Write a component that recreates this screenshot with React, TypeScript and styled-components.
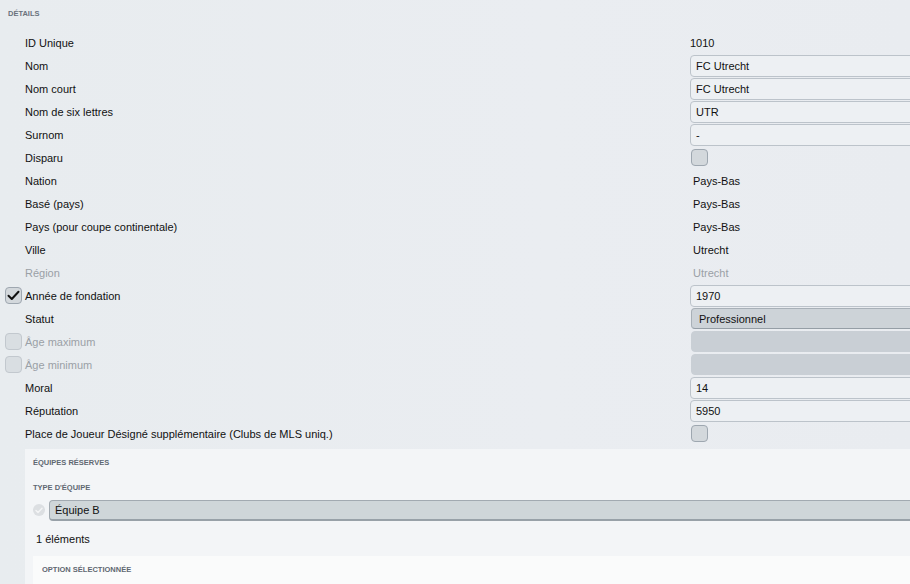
import React from "react";
import styled, { createGlobalStyle } from "styled-components";

const Global = createGlobalStyle`
  html, body { margin: 0; padding: 0; background: #e9edf0; }
  body { font-family: "Liberation Sans", Arial, sans-serif; color: #111; }
`;

const Page = styled.div`
  width: 910px;
  height: 584px;
  overflow: hidden;
  background: linear-gradient(90deg, #e8ecef 0%, #eaedf1 60%, #e9ecf0 100%);
`;

const SectionTitle = styled.div<{ $pl?: number; $h?: number }>`
  height: ${(p) => p.$h ?? 26}px;
  padding-left: ${(p) => p.$pl ?? 8}px;
  display: flex;
  align-items: center;
  font-size: 7.5px;
  font-weight: bold;
  color: #69727c;
  text-transform: uppercase;
`;

const Rows = styled.div`
  padding-top: 5px;
  display: flex;
  flex-direction: column;
`;

const Row = styled.div`
  display: grid;
  grid-template-columns: 25px 665px 1fr;
  height: 23px;
  align-items: center;
`;

const Label = styled.div<{ $disabled?: boolean }>`
  font-size: 11px;
  color: ${(p) => (p.$disabled ? "#9aa0a6" : "#111")};
  white-space: nowrap;
`;

const Value = styled.div<{ $disabled?: boolean; $indent?: number }>`
  font-size: 11px;
  padding-left: ${(p) => p.$indent ?? 0}px;
  color: ${(p) => (p.$disabled ? "#9aa0a6" : "#111")};
  white-space: nowrap;
`;

const Input = styled.div`
  box-sizing: border-box;
  height: 22px;
  width: 240px;
  border: 1px solid #bcc3ca;
  border-radius: 4px;
  background: #edf0f3;
  display: flex;
  align-items: center;
  padding-left: 5px;
  font-size: 11px;
  color: #111;
`;

const Select = styled.div<{ $empty?: boolean }>`
  box-sizing: border-box;
  height: 21px;
  width: 240px;
  margin-left: 1px;
  border: 1px solid ${(p) => (p.$empty ? "#c9cfd5" : "#a8b0b7")};
  border-bottom-color: ${(p) => (p.$empty ? "#c9cfd5" : "#959ea6")};
  border-radius: 4px;
  background: ${(p) => (p.$empty ? "#c9cfd5" : "#cdd3d8")};
  display: flex;
  align-items: center;
  padding-left: 7px;
  font-size: 11px;
  color: #111;
`;

const Box = styled.div<{ $disabled?: boolean }>`
  box-sizing: border-box;
  width: 17px;
  height: 17px;
  margin-left: ${(p) => (p.$disabled === undefined ? 1 : 0)}px;
  border: 1px solid ${(p) => (p.$disabled ? "#c2c8ce" : "#9ea7b0")};
  border-radius: 4px;
  background: ${(p) => (p.$disabled ? "#d9dee2" : "#d3d8dc")};
  display: flex;
  align-items: center;
  justify-content: center;
`;

const LeftCell = styled.div`
  display: flex;
  align-items: center;
  padding-left: 5px;
`;

const SubPanel = styled.div`
  margin: 4px 0 0 25px;
  background: #f3f5f7;
`;

const SubTitle = styled.div<{ $pl: number; $h: number }>`
  height: ${(p) => p.$h}px;
  padding-left: ${(p) => p.$pl}px;
  display: flex;
  align-items: center;
  font-size: 7.5px;
  font-weight: bold;
  color: #5f6872;
  text-transform: uppercase;
`;

const TypeRow = styled.div`
  display: flex;
  align-items: center;
  height: 22px;
  padding-left: 8px;
  gap: 4px;
`;

const CircleCheck = styled.div`
  width: 12px;
  height: 12px;
  border-radius: 50%;
  background: #dcdfe2;
  display: flex;
  align-items: center;
  justify-content: center;
`;

const TypeSelect = styled.div`
  box-sizing: border-box;
  flex: 1;
  height: 21px;
  margin-right: -10px;
  border: 1px solid #a2aab1;
  border-bottom: 2px solid #98a1a8;
  border-radius: 4px;
  background: #cfd6d9;
  display: flex;
  align-items: center;
  padding-left: 5px;
  font-size: 11px;
  color: #111;
`;

const Count = styled.div`
  height: 35px;
  display: flex;
  align-items: center;
  padding-left: 11px;
  font-size: 11px;
  color: #111;
`;

const InnerPanel = styled.div`
  margin-left: 8px;
  background: #fafbfb;
  height: 40px;
`;

const Check = () => (
  <svg width="13" height="11" viewBox="0 0 13 11">
    <path d="M1.5 5.8 L4.8 9 L11.5 1.8" fill="none" stroke="#111" strokeWidth="2" strokeLinecap="round" strokeLinejoin="round" />
  </svg>
);

const SmallCheck = () => (
  <svg width="8" height="7" viewBox="0 0 8 7">
    <path d="M1 3.6 L3 5.5 L7 1.3" fill="none" stroke="#f4f5f6" strokeWidth="1.4" strokeLinecap="round" strokeLinejoin="round" />
  </svg>
);

type Kind = "text" | "input" | "box" | "select" | "empty";
type R = { label: string; value?: string; kind: Kind; disabled?: boolean; left?: "checked" | "off"; indent?: number };

const rows: R[] = [
  { label: "ID Unique", value: "1010", kind: "text" },
  { label: "Nom", value: "FC Utrecht", kind: "input" },
  { label: "Nom court", value: "FC Utrecht", kind: "input" },
  { label: "Nom de six lettres", value: "UTR", kind: "input" },
  { label: "Surnom", value: "-", kind: "input" },
  { label: "Disparu", kind: "box" },
  { label: "Nation", value: "Pays-Bas", kind: "text", indent: 3 },
  { label: "Basé (pays)", value: "Pays-Bas", kind: "text", indent: 3 },
  { label: "Pays (pour coupe continentale)", value: "Pays-Bas", kind: "text", indent: 3 },
  { label: "Ville", value: "Utrecht", kind: "text", indent: 3 },
  { label: "Région", value: "Utrecht", kind: "text", disabled: true, indent: 3 },
  { label: "Année de fondation", value: "1970", kind: "input", left: "checked" },
  { label: "Statut", value: "Professionnel", kind: "select" },
  { label: "Âge maximum", kind: "empty", disabled: true, left: "off" },
  { label: "Âge minimum", kind: "empty", disabled: true, left: "off" },
  { label: "Moral", value: "14", kind: "input" },
  { label: "Réputation", value: "5950", kind: "input" },
  { label: "Place de Joueur Désigné supplémentaire (Clubs de MLS uniq.)", kind: "box" },
];

const renderValue = (r: R) => {
  switch (r.kind) {
    case "text":
      return (
        <Value $disabled={r.disabled} $indent={r.indent}>
          {r.value}
        </Value>
      );
    case "input":
      return <Input>{r.value}</Input>;
    case "box":
      return <Box />;
    case "select":
      return <Select>{r.value}</Select>;
    case "empty":
      return <Select $empty />;
  }
};

export default function App() {
  return (
    <Page>
      <Global />
      <SectionTitle>Détails</SectionTitle>
      <Rows>
        {rows.map((r) => (
          <Row key={r.label}>
            <LeftCell>
              {r.left === "checked" && (
                <Box $disabled={false}>
                  <Check />
                </Box>
              )}
              {r.left === "off" && <Box $disabled />}
            </LeftCell>
            <Label $disabled={r.disabled}>{r.label}</Label>
            {renderValue(r)}
          </Row>
        ))}
      </Rows>
      <SubPanel>
        <SubTitle $pl={8} $h={27}>Équipes réserves</SubTitle>
        <SubTitle $pl={8} $h={23}>Type d'équipe</SubTitle>
        <TypeRow>
          <CircleCheck>
            <SmallCheck />
          </CircleCheck>
          <TypeSelect>Équipe B</TypeSelect>
        </TypeRow>
        <Count>1 éléments</Count>
        <InnerPanel>
          <SubTitle $pl={9} $h={26}>Option sélectionnée</SubTitle>
        </InnerPanel>
      </SubPanel>
    </Page>
  );
}
